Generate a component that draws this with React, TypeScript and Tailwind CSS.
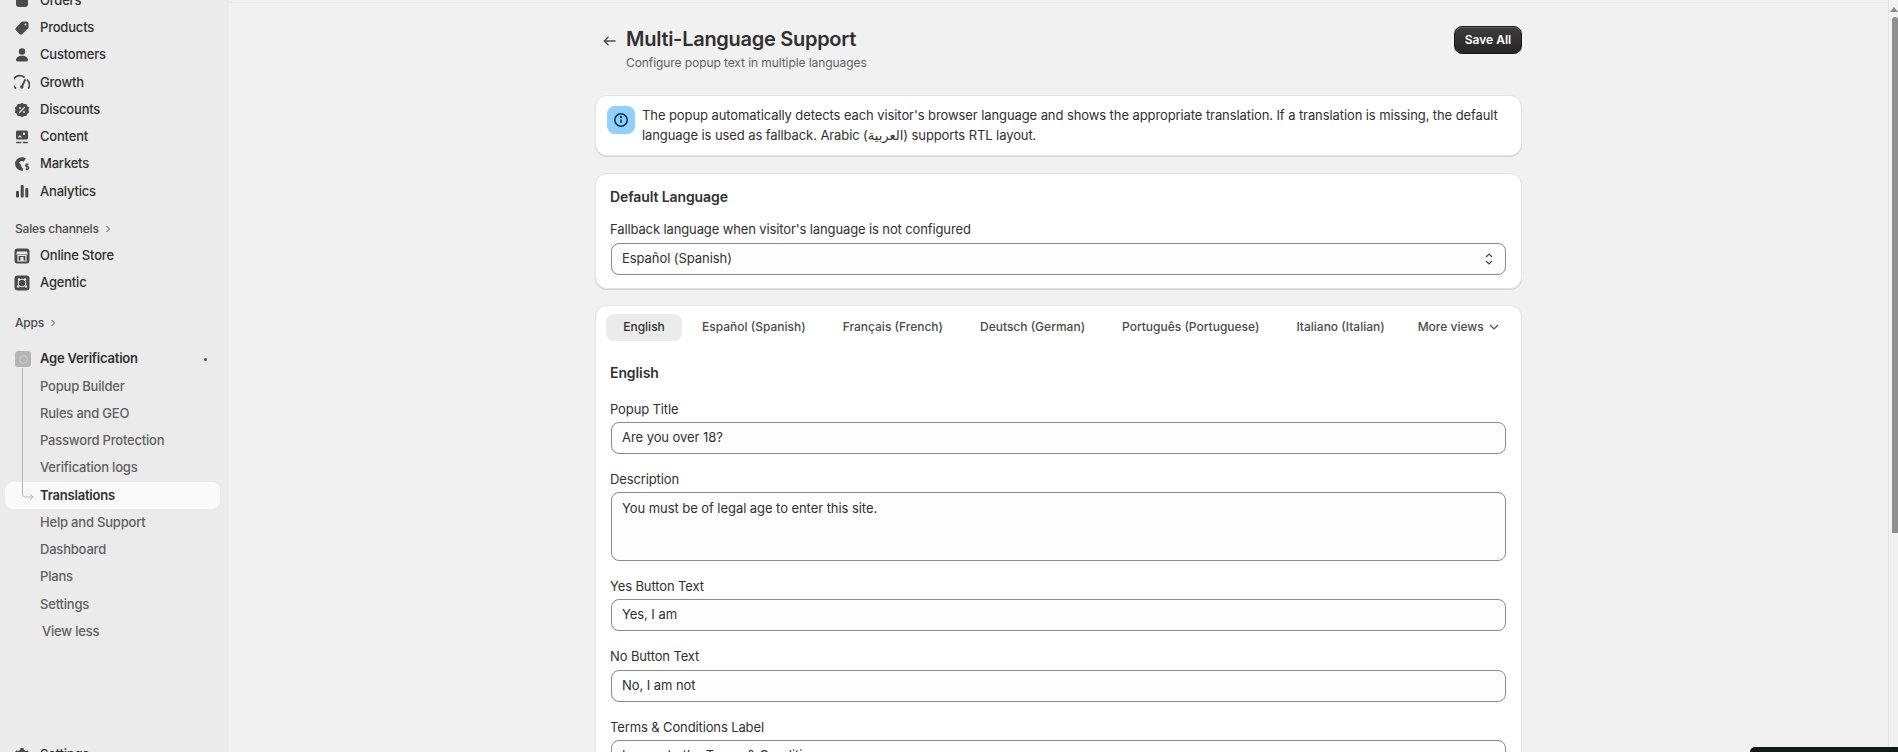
import { ReactNode } from "react";

const font = "font-['Inter','DejaVu_Sans',sans-serif]";

function Ico({ children }: { children: ReactNode }) {
  return (
    <svg viewBox="0 0 16 16" className="w-4 h-4 shrink-0 fill-[#4a4a4a]">
      {children}
    </svg>
  );
}

const mainNav: { label: string; icon: ReactNode }[] = [
  { label: "Orders", icon: <rect x="2" y="2" width="12" height="12" rx="3" /> },
  {
    label: "Products",
    icon: <path fillRule="evenodd" d="M9 1.500h3.500a2 2 0 0 1 2 2V7a2 2 0 0 1-.6 1.400l-5.600 5.600a2 2 0 0 1-2.800 0L2 10.500a2 2 0 0 1 0-2.800l5.600-5.600A2 2 0 0 1 9 1.500Zm2.500 2a1 1 0 1 0 0 2 1 1 0 0 0 0-2Z" />,
  },
  {
    label: "Customers",
    icon: (
      <>
        <circle cx="8" cy="4.500" r="3.200" />
        <path d="M2 13c0-2.600 2.400-4.200 6-4.200s6 1.600 6 4.200c0 .9-.6 1.500-1.500 1.500h-9C2.600 14.500 2 13.900 2 13Z" />
      </>
    ),
  },
  {
    label: "Growth",
    icon: (
      <>
        <path d="M1.500 14A6.700 6.700 0 0 1 10 3" fill="none" stroke="#4a4a4a" strokeWidth="1.700" strokeLinecap="round" />
        <path d="M13.300 6a6.700 6.700 0 0 1 1.300 8" fill="none" stroke="#4a4a4a" strokeWidth="1.700" strokeLinecap="round" />
        <path d="M8 12.500 11 6" fill="none" stroke="#4a4a4a" strokeWidth="1.800" strokeLinecap="round" />
        <circle cx="7.800" cy="13" r="1.700" />
      </>
    ),
  },
  {
    label: "Discounts",
    icon: (
      <>
        <path d="M8 .8l2 1.300 2.400-.2.800 2.300 2 1.400-.7 2.400.7 2.400-2 1.400-.8 2.300-2.400-.2-2 1.300-2-1.300-2.400.2-.8-2.300-2-1.400.7-2.400-.7-2.400 2-1.400.8-2.300 2.400.2Z" />
        <path d="M5.500 10.500l5-5" stroke="#ebebeb" strokeWidth="1.300" strokeLinecap="round" />
        <circle cx="6" cy="6" r="1" fill="#ebebeb" />
        <circle cx="10" cy="10" r="1" fill="#ebebeb" />
      </>
    ),
  },
  {
    label: "Content",
    icon: (
      <>
        <path fillRule="evenodd" d="M3.500 1.500h9A1.500 1.500 0 0 1 14 3v6a1.500 1.500 0 0 1-1.500 1.500h-9A1.500 1.500 0 0 1 2 9V3a1.500 1.500 0 0 1 1.500-1.500Zm6.500 2a1.200 1.200 0 1 0 0 2.400 1.200 1.200 0 0 0 0-2.400ZM3.500 8.700 6 6l2 2.500h-.5l-2-.200Z" />
        <rect x="2" y="12.700" width="5.500" height="1.500" rx=".7" />
        <rect x="9" y="12.700" width="5" height="1.500" rx=".7" />
      </>
    ),
  },
  {
    label: "Markets",
    icon: (
      <>
        <path d="M8 1.200a6.800 6.800 0 0 1 4 1.300L9.700 5.500 7 5 5 6.500l2 2.500.5 2 1.500 1.500V14.700A6.800 6.800 0 1 1 8 1.200Z" />
        <path d="M14.500 8.300h-1.700a1 1 0 0 0 0 2.400h.8a1 1 0 0 1 0 2.400h-2M12.900 7.200v7" fill="none" stroke="#4a4a4a" strokeWidth="1.200" />
      </>
    ),
  },
  {
    label: "Analytics",
    icon: (
      <>
        <rect x="2" y="8" width="3" height="6.500" rx="1" />
        <rect x="6.700" y="2" width="3" height="12.500" rx="1" />
        <rect x="11.300" y="5" width="3" height="9.500" rx="1" />
      </>
    ),
  },
];

function NavRow({ label, icon }: { label: string; icon: ReactNode }) {
  return (
    <div className="h-[27.25px] flex items-center pl-[14px] gap-[10px] text-[13px] tracking-[-0.2px] font-medium text-[#303030]">
      {icon}
      <span>{label}</span>
    </div>
  );
}

const subNav = ["Popup Builder", "Rules and GEO", "Password Protection", "Verification logs", "Translations", "Help and Support", "Dashboard", "Plans", "Settings"];

function Sidebar() {
  return (
    <aside className="w-[229px] shrink-0 h-full bg-[#ebebeb] flex flex-col overflow-hidden relative">
      <div className="-mt-[13px]">
        {mainNav.map((n) => (
          <NavRow key={n.label} label={n.label} icon={<Ico>{n.icon}</Ico>} />
        ))}
      </div>

      <div className="mt-[10px] h-[27px] flex items-center pl-[15px] gap-[5px] text-[12px] tracking-[-0.18px] font-medium text-[#4a4a4a]">
        Sales channels
        <svg viewBox="0 0 8 8" className="w-2 h-2 fill-none stroke-[#4a4a4a] stroke-1"><path d="M2.500 1l3 3-3 3" /></svg>
      </div>
      <NavRow
        label="Online Store"
        icon={
          <svg viewBox="0 0 16 16" className="w-4 h-4 shrink-0">
            <rect x="0.500" y="0.500" width="15" height="15" rx="3" fill="#4a4a4a" />
            <path d="M3 3.500h10l.8 3H2.200Z" fill="#ebebeb" />
            <path d="M4 7.500h8V13H4Z" fill="none" stroke="#ebebeb" strokeWidth="1.200" />
            <rect x="6.500" y="9" width="3" height="4" fill="#ebebeb" />
          </svg>
        }
      />
      <NavRow
        label="Agentic"
        icon={
          <svg viewBox="0 0 16 16" className="w-4 h-4 shrink-0">
            <rect x="0.500" y="0.500" width="15" height="15" rx="3" fill="#4a4a4a" />
            <circle cx="8" cy="8" r="3.800" fill="none" stroke="#ebebeb" strokeWidth="1.100" />
            <circle cx="5" cy="4.500" r="1.200" fill="#ebebeb" />
            <circle cx="11" cy="4.500" r="1.200" fill="#ebebeb" />
            <circle cx="4" cy="11.500" r="1.200" fill="#ebebeb" />
            <circle cx="12" cy="11.500" r="1.200" fill="#ebebeb" />
          </svg>
        }
      />

      <div className="mt-[13px] h-[27px] flex items-center pl-[15px] gap-[5px] text-[12px] tracking-[-0.18px] font-medium text-[#4a4a4a]">
        Apps
        <svg viewBox="0 0 8 8" className="w-2 h-2 fill-none stroke-[#4a4a4a] stroke-1"><path d="M2.500 1l3 3-3 3" /></svg>
      </div>

      <div className="relative mt-[9px]">
        <div className="h-[27.25px] flex items-center pl-[15px] gap-[9px] text-[13px] tracking-[-0.2px] font-semibold text-[#303030] pr-[22px]">
          <div className="w-4 h-4 rounded-[3px] bg-[#b5b5b5] flex items-center justify-center">
            <div className="w-[9px] h-[9px] rounded-full border border-[#cfcfcf]" />
          </div>
          <span className="flex-1">Age Verification</span>
          <span className="w-[3px] h-[3px] rounded-full bg-[#4a4a4a]" />
        </div>
        {subNav.map((s) =>
          s === "Translations" ? (
            <div key={s} className="ml-[5px] mr-[9px] h-[27.25px] flex items-center pl-[35px] rounded-lg bg-[#fafafa] text-[13px] tracking-[-0.2px] font-semibold text-[#303030]">
              {s}
            </div>
          ) : (
            <div key={s} className="h-[27.25px] flex items-center pl-[40px] text-[13px] tracking-[-0.2px] font-medium text-[#616161]">
              {s}
            </div>
          )
        )}
        <div className="h-[27.25px] flex items-center pl-[42px] text-[13px] tracking-[-0.2px] font-medium text-[#616161]">View less</div>

        <svg className="absolute left-[18px] top-[22px] w-[18px] h-[136px] fill-none stroke-[#b5b5b5]" viewBox="0 0 18 136">
          <path d="M4.500 0V126q0 3 3 3H15M12 126l3 3-3 3" />
        </svg>
      </div>

      <div className="absolute left-0 top-[741px] w-full">
        <NavRow
          label="Settings"
          icon={
            <Ico>
              <path fillRule="evenodd" d="M6.500 1h3l.5 2 1.800 1 2-.6 1.500 2.600-1.500 1.400v2l1.500 1.400-1.500 2.600-2-.6-1.800 1-.5 2h-3l-.5-2-1.800-1-2 .6L.7 10.800 2.200 9.400v-2L.7 6 2.200 3.400l2 .6 1.800-1ZM8 6a2.400 2.400 0 1 0 0 4.800A2.400 2.400 0 0 0 8 6Z" />
            </Ico>
          }
        />
      </div>
    </aside>
  );
}

function Card({ className = "", children }: { className?: string; children: ReactNode }) {
  return (
    <div className={`bg-white rounded-xl border border-[#e3e3e3] shadow-[0_1px_1px_rgba(0,0,0,0.12)] ${className}`}>
      {children}
    </div>
  );
}

function Field({ label, value }: { label: string; value: string }) {
  return (
    <div>
      <div className="h-[20px] mb-[3.4px] -ml-[1px] text-[13px] tracking-[-0.12px] leading-[20px] text-[#303030]">{label}</div>
      <input
        readOnly
        value={value}
        className="block w-full h-[32px] rounded-lg border border-[#8a8a8a] bg-[#fdfdfd] pl-[10px] pr-[11px] pb-[2px] text-[13px] tracking-[-0.06px] text-[#303030] outline-none"
      />
    </div>
  );
}

const tabs = ["Español (Spanish)", "Français (French)", "Deutsch (German)", "Português (Portuguese)", "Italiano (Italian)"];

function Content() {
  return (
    <main className="flex-1 min-w-0 h-full overflow-hidden border-t border-[#e8e8e8] mt-[2px]">
      <div className="w-[927px] mx-auto">
        <div className="flex justify-between items-start pt-[23px] h-[92px]">
          <div className="flex items-start pl-[7px]">
            <svg viewBox="0 0 16 16" className="w-4 h-4 mt-[7px] fill-none stroke-[#4a4a4a] stroke-[1.300]">
              <path d="M13.500 8h-11M6.500 3.800 2.300 8l4.200 4.200" />
            </svg>
            <div className="ml-[8px]">
              <h1 className="mt-[1px] text-[20px] leading-[24px] font-semibold text-[#303030] tracking-[-0.28px]">Multi-Language Support</h1>
              <p className="text-[12px] leading-[20px] tracking-[-0.08px] text-[#616161] mt-[2px]">Configure popup text in multiple languages</p>
            </div>
          </div>
          <button className="h-[28px] w-[68px] pb-[1px] rounded-lg bg-gradient-to-b from-[#3d3d3d] to-[#262626] border border-[#1a1a1a] shadow-[inset_0_1px_0_rgba(255,255,255,0.2)] text-white text-[12px] font-semibold">
            Save All
          </button>
        </div>

        <Card className="flex gap-[7px] pl-[11px] pr-[10px] py-[10px] h-[61px]">
          <div className="w-[28px] h-[28px] rounded-lg bg-[#91d0ff] flex items-center justify-center shrink-0">
            <svg viewBox="0 0 16 16" className="w-4 h-4 fill-none stroke-[#00324f] stroke-[1.500]">
              <circle cx="8" cy="8" r="6.200" />
              <path d="M8 7.500v3.500" />
              <circle cx="8" cy="5" r=".5" />
            </svg>
          </div>
          <p className="-mt-[1px] text-[13px] tracking-[-0.09px] leading-[20px] text-[#303030]">
            The popup automatically detects each visitor's browser language and shows the appropriate translation. If a translation is missing, the default language is used as fallback. Arabic (العربية) supports RTL layout.
          </p>
        </Card>

        <Card className="mt-[17px] h-[116px] py-[15px] pl-[14px] pr-[15px]">
          <h2 className="text-[14px] leading-[16px] tracking-[-0.1px] font-semibold text-[#303030]">Default Language</h2>
          <div className="mt-[14px] h-[20px] mb-[4px] text-[13px] tracking-[-0.12px] leading-[20px] text-[#303030]">Fallback language when visitor's language is not configured</div>
          <div className="ml-[1px] h-[32px] rounded-lg border border-[#8a8a8a] bg-[#fdfdfd] pl-[10px] pr-[10px] pb-[1px] flex items-center justify-between text-[13px] tracking-[-0.06px] text-[#303030]">
            <span>Español (Spanish)</span>
            <svg viewBox="0 0 12 16" className="w-3 h-4 fill-none stroke-[#4a4a4a] stroke-[1.200]">
              <path d="M3 6l3-3 3 3M3 10l3 3 3-3" />
            </svg>
          </div>
        </Card>

        <Card className="mt-[16px] px-[10px] pt-[8px] pb-[15px]">
          <div className="flex items-center gap-[5px] h-[27px] whitespace-nowrap">
            <div className="shrink-0 h-[27px] w-[76px] pb-[1px] justify-center -mr-[1px] rounded-lg bg-[#ebebeb] flex items-center text-[12px] font-medium text-[#303030]">English</div>
            {tabs.map((t) => (
              <div key={t} className="shrink-0 h-[27px] px-4 pb-[1px] flex items-center text-[12px] font-medium text-[#4a4a4a]">{t}</div>
            ))}
            <div className="shrink-0 h-[27px] px-4 -ml-[4px] pb-[1px] flex items-center gap-[5px] text-[12px] font-medium text-[#4a4a4a]">
              More views
              <svg viewBox="0 0 10 10" className="w-[10px] h-[10px] fill-none stroke-[#4a4a4a] stroke-[1.200]"><path d="M1 3l4 4 4-4" /></svg>
            </div>
          </div>
          <div className="px-[5px]">
            <h2 className="mt-[24px] -ml-[1px] text-[14px] leading-[16px] tracking-[-0.1px] font-semibold text-[#303030]">English</h2>
            <div className="mt-[17.6px] flex flex-col gap-[15px]">
              <Field label="Popup Title" value="Are you over 18?" />
              <div>
                <div className="h-[20px] mb-[3.4px] -ml-[1px] text-[13px] tracking-[-0.12px] leading-[20px] text-[#303030]">Description</div>
                <textarea
                  readOnly
                  value="You must be of legal age to enter this site."
                  className="block w-full h-[68.4px] resize-none rounded-lg border border-[#8a8a8a] bg-[#fdfdfd] pl-[10px] pr-[11px] py-[5px] text-[13px] tracking-[-0.06px] leading-[20px] text-[#303030] outline-none"
                />
              </div>
              <Field label="Yes Button Text" value="Yes, I am" />
              <Field label="No Button Text" value="No, I am not" />
              <Field label="Terms & Conditions Label" value="I agree to the Terms & Conditions" />
            </div>
          </div>
        </Card>
      </div>
    </main>
  );
}

function Scrollbar() {
  return (
    <div className="w-[10px] shrink-0 h-full border-l border-[#e3e3e3] bg-[#f1f1f1] flex flex-col items-end pt-[7px]">
      <svg viewBox="0 0 8 5" className="w-2 h-[5px] fill-[#8a8a8a]"><path d="M4 0l4 5H0Z" /></svg>
      <div className="mt-[5px] w-[6px] h-[516px] rounded-t-sm bg-[#8f8f8f]" />
    </div>
  );
}

export default function App() {
  return (
    <div className={`${font} relative flex w-full h-[752px] overflow-hidden bg-[#f1f1f1] antialiased`}>
      <Sidebar />
      <Content />
      <Scrollbar />
      <div className="absolute left-[1750px] top-[747px] w-[148px] h-[5px] rounded-tl-lg bg-[#111a1a]" />
    </div>
  );
}
